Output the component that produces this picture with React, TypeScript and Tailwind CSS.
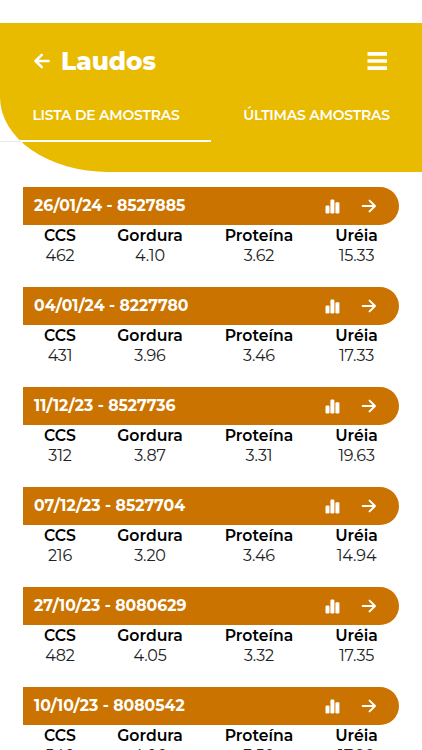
import React from 'react';

interface Sample {
  date: string;
  code: string;
  ccs: string;
  fat: string;
  protein: string;
  urea: string;
}

const samples: Sample[] = [
  { date: '26/01/24', code: '8527885', ccs: '462', fat: '4.10', protein: '3.62', urea: '15.33' },
  { date: '04/01/24', code: '8227780', ccs: '431', fat: '3.96', protein: '3.46', urea: '17.33' },
  { date: '11/12/23', code: '8527736', ccs: '312', fat: '3.87', protein: '3.31', urea: '19.63' },
  { date: '07/12/23', code: '8527704', ccs: '216', fat: '3.20', protein: '3.46', urea: '14.94' },
  { date: '27/10/23', code: '8080629', ccs: '482', fat: '4.05', protein: '3.32', urea: '17.35' },
  { date: '10/10/23', code: '8080542', ccs: '540', fat: '4.00', protein: '3.50', urea: '17.20' },
];

const BackIcon = () => (
  <svg width="16" height="16" viewBox="0 0 16 16" fill="none" stroke="currentColor" strokeWidth="2.5" strokeLinecap="round" strokeLinejoin="round">
    <path d="M14.6 8H1.7M7.8 1.8L1.5 8l6.3 6.2" />
  </svg>
);

const MenuIcon = () => (
  <svg width="20" height="18" viewBox="0 0 20 18" fill="currentColor">
    <path d="M.5 0H20v3.7H.5zM.5 7.2H20v3.6H.5zM.5 14.2H20V18H.5z" />
  </svg>
);

const ChartIcon = () => (
  <svg width="15" height="15" viewBox="0 0 15 15" fill="currentColor">
    <rect x="0.5" y="6.4" width="4" height="8.2" rx="1.3" />
    <rect x="5.4" y="0.6" width="4" height="14" rx="1.3" />
    <rect x="10.4" y="3.2" width="4" height="11.4" rx="1.3" />
  </svg>
);

const ForwardIcon = () => (
  <svg width="15" height="14" viewBox="0 0 15 14" fill="none" stroke="currentColor" strokeWidth="2" strokeLinecap="round" strokeLinejoin="round">
    <path d="M1.7 7h12.2M8.6 1.6L14 7l-5.4 5.4" />
  </svg>
);

const Metric: React.FC<{ label: string; value: string; className: string }> = ({ label, value, className }) => (
  <div className={`flex flex-col items-center whitespace-nowrap ${className}`}>
    <span className="text-[15.7px] leading-[19px] font-semibold">{label}</span>
    <span className="text-[16px] leading-[22px] tracking-[-0.15px] text-[#222]">{value}</span>
  </div>
);

const SampleCard: React.FC<{ sample: Sample }> = ({ sample }) => (
  <article className="h-[100px] px-[23px]">
    <div className="flex h-[38px] items-center rounded-r-full bg-[#cb7300] pl-[11px] pr-[23px] text-white">
      <h2 className="flex-1 text-[15.7px] font-bold">
        {sample.date} - {sample.code}
      </h2>
      <div className="flex items-center gap-[21px]">
        <ChartIcon />
        <ForwardIcon />
      </div>
    </div>
    <div className="flex pt-px text-black">
      <Metric label="CCS" value={sample.ccs} className="w-[74px]" />
      <Metric label="Gordura" value={sample.fat} className="w-[106px]" />
      <Metric label="Proteína" value={sample.protein} className="w-[112px]" />
      <Metric label="Uréia" value={sample.urea} className="w-[83px]" />
    </div>
  </article>
);

export default function App() {
  return (
    <main className="h-[750px] w-[422px] overflow-hidden bg-white pt-[23px] font-['Montserrat','Inter',sans-serif]">
      <header className="relative h-[149px] rounded-bl-[108px_75px] bg-[#e8ba00] text-white">
        {/* tab track, visible only where the header curves away */}
        <div className="absolute top-[118px] left-0 h-px w-[21px] bg-[#e9e9e9]" />
        <div className="flex h-[76px] items-center pl-[34px] pr-[35px]">
          <BackIcon />
          <h1 className="flex-1 pt-px pl-[11px] text-[24.7px] font-extrabold">Laudos</h1>
          <MenuIcon />
        </div>
        <nav className="grid h-[43px] grid-cols-2 text-center text-[14px] font-semibold tracking-[-0.22px] whitespace-nowrap">
          <div className="flex items-start justify-center border-b-2 border-white pt-[6px] pl-px">
            <span>LISTA DE AMOSTRAS</span>
          </div>
          <div className="flex items-start justify-center pt-[6px]">
            <span>ÚLTIMAS AMOSTRAS</span>
          </div>
        </nav>
      </header>
      <section className="pt-[15px]">
        {samples.map((sample) => (
          <SampleCard key={sample.code} sample={sample} />
        ))}
      </section>
    </main>
  );
}
